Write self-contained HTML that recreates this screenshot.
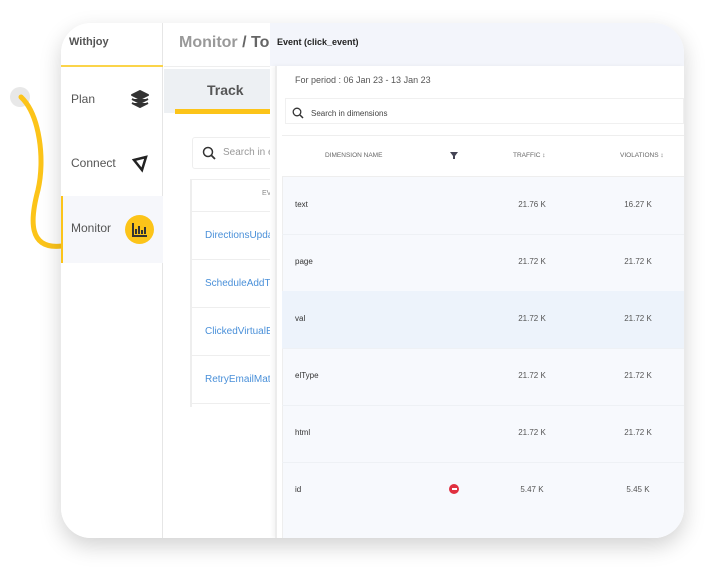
<!DOCTYPE html>
<html><head><meta charset="utf-8"><style>
*{box-sizing:border-box;margin:0;padding:0}
body{width:714px;height:570px;background:#fff;font-family:"Liberation Sans",sans-serif;position:relative;overflow:hidden}
.card{position:absolute;left:61px;top:23px;width:623px;height:515px;border-radius:30px;background:#fff;overflow:hidden;box-shadow:0 8px 22px rgba(0,0,0,.18)}
.abs{position:absolute}
.side{left:0;top:0;width:102px;height:515px;background:#fff;border-right:1px solid #e6e6e6}
.nav{position:absolute;left:10px;font-size:12px;color:#555}
.t{font-size:8px;color:#333}
.num{font-size:8px;color:#555;position:absolute;width:60px;text-align:center}
.clip{position:absolute;left:103px;top:0;width:106px;height:515px;overflow:hidden}
</style></head><body>
<svg class="abs" style="left:0;top:80px" width="70" height="180"><circle cx="20" cy="17" r="10" fill="#e8e8e8"/><path d="M21 17 C40 35 45 80 38 110 C30 140 28 170 62 166" fill="none" stroke="#fcc419" stroke-width="5" stroke-linecap="round"/></svg>
<div class="card">
 <div class="abs side">
  <div class="abs" style="left:0;top:0;width:102px;height:44px;border-bottom:2px solid #fbd44a"></div>
  <div class="nav" style="left:8px;top:13px;font-weight:bold;font-size:11px;color:#555">Withjoy</div>
  <div class="nav" style="top:69px">Plan</div>
  <svg class="abs" style="left:69px;top:66px" width="20" height="20"><path d="M10 2 L18 6 L10 10 L2 6Z M2 10 L10 14 L18 10 M2 14 L10 18 L18 14" fill="#333" stroke="#333" stroke-width="2" stroke-linejoin="round"/></svg>
  <div class="nav" style="top:133px">Connect</div>
  <svg class="abs" style="left:70px;top:131px" width="18" height="20"><path d="M3 6 L15 3 L11 16 Z" fill="none" stroke="#222" stroke-width="2.5"/></svg>
  <div class="abs" style="left:0;top:173px;width:102px;height:67px;background:#f6f7fb;border-left:2px solid #fcc419"></div>
  <div class="nav" style="top:198px">Monitor</div>
  <div class="abs" style="left:64px;top:192px;width:29px;height:29px;border-radius:50%;background:#fcc419"></div>
  <svg class="abs" style="left:70px;top:198px" width="18" height="17"><path d="M2 2 V15 H16 M5 13V8 M8 13V5 M11 13V9 M14 13V6" stroke="#333" stroke-width="2" fill="none"/></svg>
 </div>
 <div class="clip">
 <div class="abs" style="left:0;top:0;width:170px;height:44px;border-bottom:1px solid #eee"></div>
 <div class="abs" style="left:15px;top:11px;font-size:16px;font-weight:bold;color:#999;white-space:nowrap">Monitor <span style="color:#666">/ To</span></div>
 <div class="abs" style="left:0;top:46px;width:110px;height:44px;background:#edf0f3"></div>
 <div class="abs" style="left:11px;top:86px;width:100px;height:5px;background:#fcc419"></div>
 <div class="abs" style="left:43px;top:59px;font-size:14px;font-weight:bold;color:#555">Track</div>
 <div class="abs" style="left:28px;top:114px;width:90px;height:32px;border:1px solid #eee;border-radius:3px"></div>
 <svg class="abs" style="left:38px;top:123px" width="14" height="14"><circle cx="6" cy="6" r="4.5" fill="none" stroke="#333" stroke-width="1.5"/><path d="M9.5 9.5 L13 13" stroke="#333" stroke-width="1.8"/></svg>
 <div class="abs" style="left:59px;top:124px;font-size:10px;color:#999;white-space:nowrap">Search in events</div>
 <div class="abs" style="left:26px;top:156px;width:90px;height:228px;border-left:2px solid #eee"></div>
 <div class="abs" style="left:28px;top:156px;width:90px;height:33px;border-top:1px solid #eee;border-bottom:1px solid #eee"></div>
 <div class="abs" style="left:98px;top:167px;font-size:7px;color:#888">EVENT</div>
 <div class="abs" style="left:41px;top:207px;font-size:10px;color:#4a90d9;white-space:nowrap">DirectionsUpdated</div>
 <div class="abs" style="left:41px;top:255px;font-size:10px;color:#4a90d9;white-space:nowrap">ScheduleAddToCal</div>
 <div class="abs" style="left:41px;top:303px;font-size:10px;color:#4a90d9;white-space:nowrap">ClickedVirtualEvent</div>
 <div class="abs" style="left:41px;top:351px;font-size:10px;color:#4a90d9;white-space:nowrap">RetryEmailMatch</div>
 <div class="abs" style="left:28px;top:236px;width:90px;border-top:1px solid #eee"></div>
 <div class="abs" style="left:28px;top:284px;width:90px;border-top:1px solid #eee"></div>
 <div class="abs" style="left:28px;top:332px;width:90px;border-top:1px solid #eee"></div>
 <div class="abs" style="left:28px;top:380px;width:90px;border-top:1px solid #eee"></div>
 </div>
 <!-- panel -->
 <div class="abs" style="left:209px;top:0;width:414px;height:43px;background:#f3f5fb"></div>
 <div class="abs" style="left:216px;top:14px;font-size:9px;font-weight:bold;color:#222">Event (click_event)</div>
 <div class="abs" style="left:214px;top:43px;width:409px;height:472px;background:#fff;border-left:2px solid #ececec;box-shadow:-2px 0 4px rgba(0,0,0,.05)"></div>
 <div class="abs" style="left:234px;top:52px;font-size:9px;color:#555">For period : 06 Jan 23 - 13 Jan 23</div>
 <div class="abs" style="left:224px;top:75px;width:399px;height:26px;border:1px solid #f0f0f0"></div>
 <svg class="abs" style="left:231px;top:84px" width="12" height="12"><circle cx="5" cy="5" r="3.8" fill="none" stroke="#333" stroke-width="1.3"/><path d="M8 8 L11 11" stroke="#333" stroke-width="1.5"/></svg>
 <div class="abs" style="left:250px;top:86px;font-size:8px;color:#444">Search in dimensions</div>
 <div class="abs" style="left:221px;top:112px;width:402px;height:403px;background:#f7f9fd;border-left:1px solid #eee"></div>
 <div class="abs" style="left:221px;top:112px;width:402px;height:42px;background:#fff;border-top:1px solid #eee;border-bottom:1px solid #eee"></div>
 <div class="abs" style="left:264px;top:129px;font-size:6.5px;color:#666">DIMENSION NAME</div>
 <svg class="abs" style="left:389px;top:129px" width="8" height="7"><path d="M0 0H8L5 4V7H3V4Z" fill="#445"/></svg>
 <div class="abs" style="left:452px;top:129px;font-size:6.5px;color:#666">TRAFFIC ↕</div>
 <div class="abs" style="left:559px;top:129px;font-size:6.5px;color:#666">VIOLATIONS ↕</div>
 <div class="abs" style="left:221px;top:268px;width:402px;height:57px;background:#edf3fb"></div>
 <div class="abs" style="left:221px;top:211px;width:402px;border-top:1px solid #eef1f5"></div>
 <div class="abs" style="left:221px;top:325px;width:402px;border-top:1px solid #eef1f5"></div>
 <div class="abs" style="left:221px;top:382px;width:402px;border-top:1px solid #eef1f5"></div>
 <div class="abs" style="left:221px;top:439px;width:402px;border-top:1px solid #eef1f5"></div>
 <div class="abs t" style="left:234px;top:177px">text</div><div class="num" style="left:441px;top:177px">21.76 K</div><div class="num" style="left:547px;top:177px">16.27 K</div>
 <div class="abs t" style="left:234px;top:234px">page</div><div class="num" style="left:441px;top:234px">21.72 K</div><div class="num" style="left:547px;top:234px">21.72 K</div>
 <div class="abs t" style="left:234px;top:291px">val</div><div class="num" style="left:441px;top:291px">21.72 K</div><div class="num" style="left:547px;top:291px">21.72 K</div>
 <div class="abs t" style="left:234px;top:348px">elType</div><div class="num" style="left:441px;top:348px">21.72 K</div><div class="num" style="left:547px;top:348px">21.72 K</div>
 <div class="abs t" style="left:234px;top:405px">html</div><div class="num" style="left:441px;top:405px">21.72 K</div><div class="num" style="left:547px;top:405px">21.72 K</div>
 <div class="abs t" style="left:234px;top:462px">id</div><div class="num" style="left:441px;top:462px">5.47 K</div><div class="num" style="left:547px;top:462px">5.45 K</div>
 <div class="abs" style="left:388px;top:461px;width:10px;height:10px;border-radius:50%;background:#e03040"></div>
 <div class="abs" style="left:390.5px;top:465px;width:5px;height:2px;background:#fff"></div>
</div>
</body></html>
